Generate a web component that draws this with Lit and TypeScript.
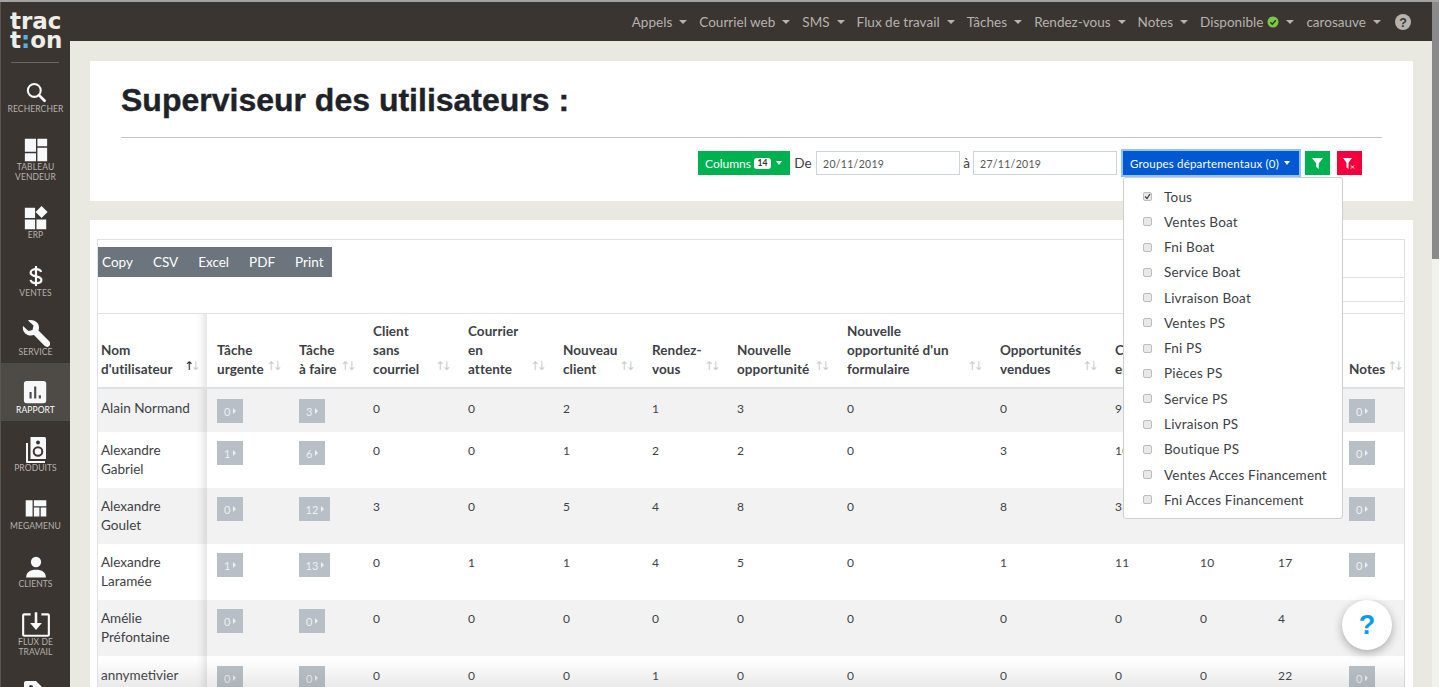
import { LitElement, html, css, svg } from "lit";
import { customElement } from "lit/decorators.js";

const navItems = ["Appels", "Courriel web", "SMS", "Flux de travail", "Tâches", "Rendez-vous", "Notes"];

const sideIcons: Record<string, unknown> = {
  search: svg`<circle cx="12" cy="11" r="7.500" fill="none" stroke="currentColor" stroke-width="2.400"/><path d="M17.500 16.500 L24 23" stroke="currentColor" stroke-width="3.200" stroke-linecap="round"/>`,
  dash: svg`<path d="M2 2h12v14H2zM15.500 2H26v8H15.500zM2 17.500h12V26H2zM15.500 11.500H26V26H15.500z" fill="currentColor"/>`,
  erp: svg`<path d="M2 3h11v11H2zM2 15.500h11V26H2zM14.500 15.500H25V26H14.500z" fill="currentColor"/><path d="M20 1l6.500 6.500-6.500 6.500-6.500-6.500z" fill="currentColor"/>`,
  sales: svg`<path d="M21 8.500C20.500 6 17.500 4.500 14 4.500c-4 0-7.500 1.900-7.500 5 0 6.800 15 3.400 15 10 0 3-3.500 4.500-7.500 4.500s-7-1.500-7.500-4.500" fill="none" stroke="currentColor" stroke-width="3.200"/><path d="M12.500 0h3v28h-3z" fill="currentColor"/>`,
  tool: svg`<path d="M1 6l5.500 5 4-1 1-4.500L6 .5c5-1.500 11 1.500 11 7 0 1-.2 2-.5 3L27 21c1.500 1.500 1.500 3.500.3 5-1.300 1.300-3.300 1.300-4.800-.2L12 15c-1 .3-2 .5-3 .5-5 0-9-4-8-9.500z" fill="currentColor"/>`,
  report: svg`<rect x="1" y="1" width="24" height="24" rx="3" fill="currentColor"/><path d="M7 13h2.300v7H7zM12 7h2.300v13H12zM17 16.500h2.300V20H17z" fill="#4e4a46"/>`,
  products: svg`<path d="M8.500 1h14a1.500 1.500 0 0 1 1.500 1.500V23H8.500z M4 7h2v18h17v2H5a1 1 0 0 1-1-1z" fill="currentColor"/><circle cx="16" cy="6.500" r="2" fill="#3b3532"/><circle cx="16" cy="15.500" r="4.300" fill="none" stroke="#3b3532" stroke-width="2"/>`,
  mega: svg`<path d="M2 5h8v19H2zM11.500 5H26v7H11.500zM11.500 13.500H18V24h-6.500zM19.500 13.500H26V24h-6.500z" fill="currentColor"/>`,
  client: svg`<circle cx="14" cy="7" r="6" fill="currentColor"/><path d="M2.500 25c0-6 4.500-9 11.500-9s11.500 3 11.500 9z" fill="currentColor"/>`,
  flow: svg`<path d="M9 5H3a1 1 0 0 0-1 1v18a1 1 0 0 0 1 1h22a1 1 0 0 0 1-1V6a1 1 0 0 0-1-1h-6" fill="none" stroke="currentColor" stroke-width="2"/><path d="M12.800 3h2.400v10h4.300L14 19.500 8.500 13h4.300z" fill="currentColor"/>`,
  tag: svg`<path d="M4 2h10l12 12-10 12L2 13V4a2 2 0 0 1 2-2z" fill="currentColor"/><circle cx="9" cy="8" r="2" fill="#3b3532"/>`,
};

type Side = { icon: string; label: string[]; size: number; t: number; g: number; b: number; active?: boolean };
const side: Side[] = [
  { icon: "search", label: ["RECHERCHER"], size: 24, t: 18, g: -1, b: 0 },
  { icon: "dash", label: ["TABLEAU", "VENDEUR"], size: 26, t: 23, g: -1, b: 0 },
  { icon: "erp", label: ["ERP"], size: 26, t: 23, g: -1, b: 0 },
  { icon: "sales", label: ["VENTES"], size: 20, t: 26, g: 2, b: 0 },
  { icon: "tool", label: ["SERVICE"], size: 28, t: 22, g: -1, b: 6 },
  { icon: "report", label: ["RAPPORT"], size: 26, t: 17, g: -1, b: 6, active: true },
  { icon: "products", label: ["PRODUITS"], size: 28, t: 15, g: -1, b: 0 },
  { icon: "mega", label: ["MEGAMENU"], size: 24, t: 23, g: 1, b: 0 },
  { icon: "client", label: ["CLIENTS"], size: 24, t: 25, g: -1, b: 0 },
  { icon: "flow", label: ["FLUX DE", "TRAVAIL"], size: 30, t: 20, g: -2, b: 0 },
  { icon: "tag", label: [], size: 28, t: 22, g: 0, b: 0 },
];

const heads: string[][] = [
  ["Nom", "d'utilisateur"],
  ["Tâche", "urgente"],
  ["Tâche", "à faire"],
  ["Client", "sans", "courriel"],
  ["Courrier", "en", "attente"],
  ["Nouveau", "client"],
  ["Rendez-", "vous"],
  ["Nouvelle", "opportunité"],
  ["Nouvelle", "opportunité d'un", "formulaire"],
  ["Opportunités", "vendues"],
  ["Courriels", "envoyés"],
  [],
  [],
  ["Notes"],
];
const colWidths = [109, 82, 74, 95, 95, 89, 85, 110, 153, 115, 85, 78, 71, 66];

type Row = { name: string[]; urgent: string; todo: string; vals: (string | number)[]; notes: string };
const rows: Row[] = [
  { name: ["Alain Normand"], urgent: "0", todo: "3", vals: [0, 0, 2, 1, 3, 0, 0, 9, "", ""], notes: "0" },
  { name: ["Alexandre", "Gabriel"], urgent: "1", todo: "6", vals: [0, 0, 1, 2, 2, 0, 3, 10, "", ""], notes: "0" },
  { name: ["Alexandre", "Goulet"], urgent: "0", todo: "12", vals: [3, 0, 5, 4, 8, 0, 8, 33, "", ""], notes: "0" },
  { name: ["Alexandre", "Laramée"], urgent: "1", todo: "13", vals: [0, 1, 1, 4, 5, 0, 1, 11, 10, 17], notes: "0" },
  { name: ["Amélie", "Préfontaine"], urgent: "0", todo: "0", vals: [0, 0, 0, 0, 0, 0, 0, 0, 0, 4], notes: "0" },
  { name: ["annymetivier"], urgent: "0", todo: "0", vals: [0, 0, 0, 1, 0, 0, 0, 0, 0, 22], notes: "0" },
];
const groups = [
  "Tous", "Ventes Boat", "Fni Boat", "Service Boat", "Livraison Boat", "Ventes PS", "Fni PS",
  "Pièces PS", "Service PS", "Livraison PS", "Boutique PS", "Ventes Acces Financement", "Fni Acces Financement",
];

@customElement("app-root")
export class AppRoot extends LitElement {
  static styles = css`
    :host { display: block; height: 687px; overflow: hidden; font-family: Lato, "Open Sans", sans-serif; color: #3d4146; }
    * { box-sizing: border-box; }
    .frame { display: grid; grid-template-columns: 70px 1fr 7px; height: 687px; overflow: hidden; position: relative; border-top: 2px solid #a5a3a1; }
    .sidebar { background: #3b3532; color: #f7f8fa; border-left: 1px solid #5a5552; display: flex; flex-direction: column; align-items: stretch; overflow: hidden; height: 685px; }
    .logo { font-family: "DejaVu Sans", sans-serif; font-weight: 700; font-size: 23px; line-height: 19px; color: #eeeee6; padding: 10px 0 0 9px; height: 60px; flex: none; }
    .logo div { height: 19px; }
    .logo b { color: #5ab0e6; }
    .rule { height: 1px; background: #6d6661; margin: 0 11px 0 10px; flex: none; }
    .side-item { display: flex; flex-direction: column; align-items: center; color: #f7f8fa; flex: none; }
    .side-item svg { display: block; flex: none; }
    .side-item span { font-size: 8.500px; line-height: 10px; color: #b5b1ad; text-align: center; letter-spacing: .1px; display: block; position: relative; }
    .side-item.active { background: #4e4a46; }
    .side-item.active span { color: #fff; }
    .side-list { display: flex; flex-direction: column; flex: none; }
    .main { display: flex; flex-direction: column; background: #e9e9e1; min-width: 0; height: 685px; position: relative; overflow: hidden; }
    .top { height: 39px; flex: none; background: #3b3532; display: flex; justify-content: flex-end; align-items: center; padding-right: 21px; color: #b6b2ae; font-size: 13.500px; }
    .top a { display: inline-flex; align-items: center; margin-left: 12px; letter-spacing: .02px; white-space: nowrap; }
    .caret { display: inline-block; width: 0; height: 0; border-left: 4px solid transparent; border-right: 4px solid transparent; border-top: 4px solid currentColor; margin-left: 7px; }
    .dot { width: 12px; height: 12px; margin-left: 4px; }
    .help { width: 16px; height: 16px; margin-left: 14px; }
    .card { background: #fff; margin: 20px 19px 0 20px; }
    .card.head { height: 140px; padding: 20px 31px 0 31px; flex: none; }
    h1 { margin: 0; font: 700 32px/38px "Liberation Sans", Arial, sans-serif; color: #1e2329; -webkit-text-stroke: .4px #1e2329; padding-bottom: 18px; border-bottom: 1px solid #c4c4c4; height: 57px; }
    .filters { display: flex; align-items: center; justify-content: flex-end; height: 24px; margin-top: 13px; padding-right: 20px; }
    .btn { height: 24px; color: #fff; display: inline-flex; align-items: center; font-size: 12px; white-space: nowrap; flex: none; }
    .green { background: #00b14f; }
    .red { background: #f5003c; }
    .columns { width: 92px; padding-left: 7px; }
    .badge { background: #fff; color: #333; font-weight: 700; font-size: 8.500px; line-height: 11px; padding: 0 3.500px; border-radius: 3px; margin-left: 3px; }
    .columns .caret { margin-left: 5px; border-top-color: #fff; border-width: 4px 3.500px 0; }
    .lbl { width: 26px; text-align: center; font-size: 13.500px; color: #3d4146; flex: none; }
    .lbl.a { width: 13px; }
    .date { width: 144px; height: 24px; border: 1px solid #ced4da; font-size: 10.500px; letter-spacing: .3px; color: #555; padding: 1px 6px 0; display: flex; align-items: center; flex: none; }
    .groups { width: 176px; height: 24px; margin-left: 6px; background: #0058d2; box-shadow: 0 0 0 2px #8cc4fa; padding-left: 7px; color: #fff; font-size: 11.500px; display: inline-flex; align-items: center; letter-spacing: .18px; white-space: nowrap; flex: none; }
    .groups .caret { border-top-color: #fff; border-width: 4px 3.500px 0; margin-left: 5px; }
    .sq { width: 25px; justify-content: center; margin-left: 6px; }
    .sq + .sq { margin-left: 7px; }
    .card.table-card { flex: none; margin-top: 19px; padding: 19px 8px 0 7px; height: 480px; }
    .box { border: 1px solid #dee2e6; border-bottom: 0; height: 461px; padding-top: 7px; overflow: hidden; }
    .tools { display: flex; height: 30px; background: #6c757d; color: #fff; font-size: 13.500px; align-items: center; width: 234px; padding-left: 4px; padding-bottom: 1px; }
    .tools span { margin-right: 20px; }
    .search-row { height: 36px; }
    .search { border-top: 1px solid #dee2e6; border-bottom: 1px solid #dee2e6; height: 25px; margin-left: 1100px; }
    table { border-collapse: separate; border-spacing: 0; table-layout: fixed; width: 1306px; font-size: 13.500px; }
    thead th { border-top: 1px solid #dee2e6; border-bottom: 2px solid #dee2e6; height: 76px; vertical-align: bottom; text-align: left; font-weight: 700; font-size: 13.500px; line-height: 19px; padding: 0 0 8px 10px; color: #3d4146; position: relative; white-space: nowrap; letter-spacing: .05px; }
    th:first-child, td:first-child { padding-left: 3px; box-shadow: inset -12px 0 9px -9px rgba(0,0,0,.13); }
    .sort { position: absolute; bottom: 14px; right: 10px; color: #c9ccd0; font-size: 12px; font-weight: 400; line-height: 14px; letter-spacing: -3.500px; font-family: "DejaVu Sans", sans-serif; }
    th:last-child .sort { right: 5px; }
    .sort i { font-style: normal; color: #222; }
    td { vertical-align: top; padding: 9px 4px 9px 10px; line-height: 19px; height: 56px; color: #3d4146; }
    tr.single td { height: 43px; padding-top: 10px; }
    tbody tr:nth-child(odd) td { background: #f2f2f2; }
    td.num { font-size: 12px; letter-spacing: .2px; }
    .cnt { display: inline-flex; align-items: center; justify-content: center; gap: 2.500px; background: #b8bfc6; color: #eef0f2; height: 24px; min-width: 26px; padding: 0 6.500px; font-size: 11px; vertical-align: top; }
    .cnt::after { content: ""; border-left: 3px solid #eef0f2; border-top: 3.500px solid transparent; border-bottom: 3.500px solid transparent; }
    .menu { position: absolute; left: 1053px; top: 175px; width: 220px; height: 342px; background: #fff; border: 1px solid #cfcfcf; border-radius: 3px; padding-top: 6px; z-index: 3; }
    .menu div { height: 25.280px; display: flex; align-items: center; font-size: 13.500px; color: #3d4146; padding-left: 19px; letter-spacing: .2px; white-space: nowrap; }
    .check { width: 9px; height: 9px; border: 1px solid #bdbdbd; background: #e9e9e9; border-radius: 2px; margin-right: 12px; flex: none; display: flex; align-items: center; justify-content: center; }
    .fade { position: absolute; left: 28px; right: 27px; bottom: 0; height: 28px; background: linear-gradient(to bottom, rgba(120,120,120,0), rgba(120,120,120,.16)); pointer-events: none; z-index: 2; }
    .fab { position: absolute; left: 1272px; top: 598px; width: 50px; height: 50px; border-radius: 50%; background: #fff; box-shadow: 0 3px 10px rgba(0,0,0,.3); display: flex; align-items: center; justify-content: center; color: #0a9bf0; font: 700 27px/1 "Liberation Sans", sans-serif; z-index: 4; }
    .scroll { background: #f1f1ee; height: 685px; }
    .thumb { background: #8a8a8a; height: 257px; }
  `;

  private renderSide() {
    return side.map(
      (s) => html`<div class="side-item ${s.active ? "active" : ""}" style="padding:${s.t}px 0 ${s.b}px">
        <svg viewBox="0 0 28 28" width="${s.size}" height="${s.size}" style="margin-bottom:${s.g}px">${sideIcons[s.icon]}</svg>
        ${s.label.map((l) => html`<span>${l}</span>`)}
      </div>`
    );
  }

  render() {
    return html`<div class="frame">
      <aside class="sidebar">
        <div class="logo"><div>trac</div><div>t<b>:</b>on</div></div>
        <div class="rule"></div>
        <div class="side-list">${this.renderSide()}</div>
      </aside>
      <div class="main">
        <header class="top">
          ${navItems.map((n) => html`<a>${n}<i class="caret"></i></a>`)}
          <a>Disponible
            <svg class="dot" viewBox="0 0 12 12"><circle cx="6" cy="6" r="5.500" fill="#7ac943"/><path d="M3.300 6.200l2 2 3.500-4" fill="none" stroke="#2c3a1c" stroke-width="1.400"/></svg>
            <i class="caret"></i></a>
          <a>carosauve<i class="caret"></i></a>
          <svg class="help" viewBox="0 0 16 16"><circle cx="8" cy="8" r="8" fill="#b6b2ae"/><text x="8" y="12.500" text-anchor="middle" font-family="Liberation Sans" font-weight="700" font-size="12.500" fill="#3b3532">?</text></svg>
        </header>
        <section class="card head">
          <h1>Superviseur des utilisateurs :</h1>
          <div class="filters">
            <span class="btn green columns">Columns <span class="badge">14</span><i class="caret"></i></span>
            <span class="lbl">De</span>
            <span class="date">20/11/2019</span>
            <span class="lbl a">à</span>
            <span class="date">27/11/2019</span>
            <span class="groups">Groupes départementaux (0)<i class="caret"></i></span>
            <span class="btn green sq"><svg width="11" height="11" viewBox="0 0 11 11"><path d="M0 0h11L6.800 5.500V11L4.200 9V5.500z" fill="#fff"/></svg></span>
            <span class="btn red sq"><svg width="13" height="11" viewBox="0 0 13 11"><path d="M0 0h9L5.500 4.800V11L3.500 9.500V4.800z" fill="#fff"/><path d="M8 7.500l3 3M11 7.500l-3 3" stroke="#fff" stroke-width="1"/></svg></span>
          </div>
        </section>
        <section class="card table-card">
          <div class="box">
            <div class="tools"><span>Copy</span><span>CSV</span><span>Excel</span><span>PDF</span><span>Print</span></div>
            <div class="search-row"><div class="search"></div></div>
            <table>
              <colgroup>${colWidths.map((w) => html`<col style="width:${w}px" />`)}</colgroup>
              <thead><tr>
                ${heads.map((h, i) => html`<th>${h.map((l, j) => html`${j ? html`<br />` : ""}${l}`)}${h.length ? html`<span class="sort">${i === 0 ? html`<i>↑</i>↓` : "↑↓"}</span>` : ""}</th>`)}
              </tr></thead>
              <tbody>
                ${rows.map((r) => html`<tr class="${r.name.length === 1 ? "single" : ""}">
                  <td>${r.name.map((l, j) => html`${j ? html`<br />` : ""}${l}`)}</td>
                  <td><span class="cnt">${r.urgent}</span></td>
                  <td><span class="cnt">${r.todo}</span></td>
                  ${r.vals.map((v) => html`<td class="num">${v}</td>`)}
                  <td><span class="cnt">${r.notes}</span></td>
                </tr>`)}
              </tbody>
            </table>
          </div>
        </section>
        <div class="menu">
          ${groups.map((g, i) => html`<div><span class="check">${i === 0 ? html`<svg width="7" height="7" viewBox="0 0 7 7"><path d="M1 3.500l2 2 3-4.500" fill="none" stroke="#444" stroke-width="1.300"/></svg>` : ""}</span>${g}</div>`)}
        </div>
        <div class="fade"></div>
        <div class="fab">?</div>
      </div>
      <div class="scroll"><div class="thumb"></div></div>
    </div>`;
  }
}
